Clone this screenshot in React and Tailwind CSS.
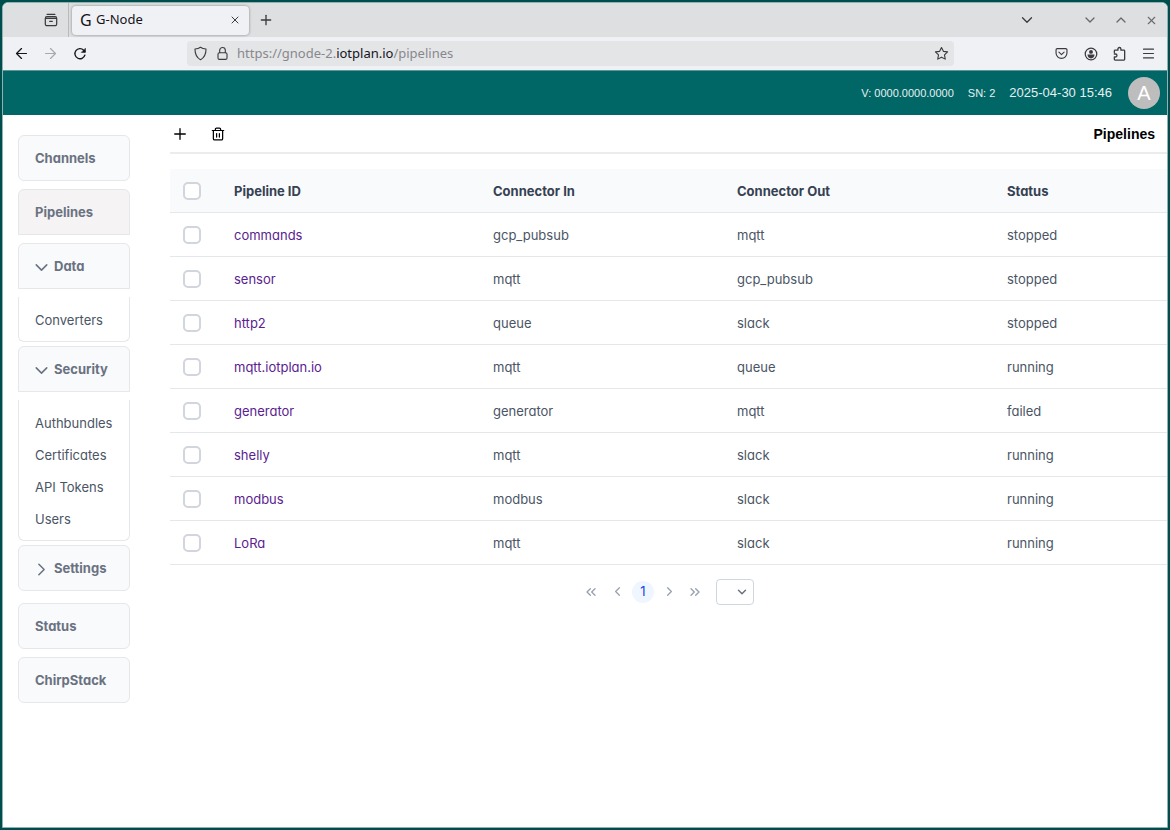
import React, { useState } from 'react';
import { ArrowLeft, ArrowRight, ChevronDown, ChevronRight, ChevronUp, ChevronLeft, ChevronsLeft, ChevronsRight, Menu, Plus, X } from 'lucide-react';

const PIPELINES = [
  { id: 'commands', input: 'gcp_pubsub', output: 'mqtt', status: 'stopped' },
  { id: 'sensor', input: 'mqtt', output: 'gcp_pubsub', status: 'stopped' },
  { id: 'http2', input: 'queue', output: 'slack', status: 'stopped' },
  { id: 'mqtt.iotplan.io', input: 'mqtt', output: 'queue', status: 'running' },
  { id: 'generator', input: 'generator', output: 'mqtt', status: 'failed' },
  { id: 'shelly', input: 'mqtt', output: 'slack', status: 'running' },
  { id: 'modbus', input: 'modbus', output: 'slack', status: 'running' },
  { id: 'LoRa', input: 'mqtt', output: 'slack', status: 'running' },
];

const CHECKBOX = 'block size-[18px] appearance-none rounded-[5px] border-2 border-gray-300 bg-white checked:bg-blue-500';

function Svg({ size = 16, children }) {
  return (
    <svg width={size} height={size} viewBox="0 0 16 16" fill="none" stroke="currentColor" strokeWidth="1.2" strokeLinecap="round" strokeLinejoin="round">
      {children}
    </svg>
  );
}

const I = {
  recent: () => <Svg size={14}><path strokeWidth="1.4" d="M3.500 1.500h9M1.500 6.200h13v6.500a1.800 1.800 0 0 1-1.800 1.800H3.300a1.800 1.800 0 0 1-1.800-1.800zM1.500 6.200c0-1.200.7-2 1.800-2h9.400c1.100 0 1.800.8 1.800 2M6.500 9.500h3"/></Svg>,
  reload: () => <Svg size={14}><path strokeWidth="1.5" d="M13.600 9.200a5.800 5.800 0 1 1-1.400-5.600l1.200 1.200"/><path d="M14.200 1.800v4.400H9.800z" fill="currentColor" strokeWidth="0.6"/></Svg>,
  shield: () => <Svg size={15}><path d="M8 1.300c1.700 1.300 3.600 1.800 5.900 1.900 0 5-1.300 9-5.900 11.500C3.400 12.200 2.100 8.200 2.100 3.200 4.400 3.100 6.300 2.600 8 1.300z"/></Svg>,
  lock: () => <Svg size={15}><rect x="3.200" y="7.200" width="9.600" height="7" rx="1.500"/><path d="M5 7V4.600a3 3 0 0 1 6 0V7"/></Svg>,
  star: () => <Svg size={15}><path d="M8 1.600l2 4.100 4.500.6-3.300 3.200.8 4.500L8 11.900l-4 2.100.8-4.500L1.500 6.300l4.500-.6z"/></Svg>,
  pocket: () => <Svg size={13}><path strokeWidth="1.400" d="M2.800 2h10.400a1.500 1.500 0 0 1 1.500 1.500v3.800a6.700 6.700 0 0 1-13.400 0V3.500A1.500 1.500 0 0 1 2.800 2zM4.800 6.300L8 9.300l3.200-3"/></Svg>,
  account: () => (
    <Svg size={14}>
      <circle cx="8" cy="8" r="6.600" strokeWidth="1.400"/>
      <circle cx="8" cy="5.600" r="2.200" fill="currentColor" stroke="none"/>
      <path d="M4 8.700h8c0 2.700-1.600 4.300-4 4.300s-4-1.600-4-4.300z" fill="currentColor" stroke="none"/>
    </Svg>
  ),
  puzzle: () => <Svg size={15}><path strokeWidth="1.400" d="M2.500 7V5.200c0-.5.300-.8.800-.8h3V3.200a1.600 1.600 0 0 1 3.200 0v1.200h3.200c.5 0 .8.300.8.800v9c0 .5-.3.800-.8.800H3.300a.8.800 0 0 1-.8-.8v-2.500h1.200a1.600 1.600 0 0 0 0-3.200H2.500"/></Svg>,
  trash: () => <Svg size={14}><path strokeWidth="1.400" d="M1.500 4h13M5 4V2.500c0-.8.500-1.300 1.300-1.300h3.400c.8 0 1.300.5 1.300 1.300V4M2.700 4v9.300c0 .9.600 1.500 1.500 1.500h7.600c.9 0 1.500-.6 1.500-1.500V4M6.400 7.500v4M9.600 7.500v4"/></Svg>,
};

function IconBtn({ label, className = '', children }) {
  return (
    <button type="button" aria-label={label} className={`flex h-6 w-[29px] items-center justify-center ${className}`}>
      {children}
    </button>
  );
}

function BrowserChrome() {
  return (
    <div className="font-['Noto_Sans',sans-serif] text-[13px] text-[#3b3b3f]">
      <div className="flex h-[34px] items-center rounded-t-md bg-[#dedfe1] pr-px">
        <div className="flex h-full w-[66px] shrink-0 items-center justify-end border-r border-[#b9babd] pr-[3px]">
          <IconBtn label="Recent browsing"><I.recent/></IconBtn>
        </div>
        <div className="ml-[3px] flex h-[29px] w-[177px] items-center rounded bg-[#f0f1f4] pl-2 shadow-[0_0_3px_rgba(0,0,0,0.4)]">
          <span className="w-4 text-base text-[#15141a]">G</span>
          <span className="flex-1 text-[#15141a]">G-Node</span>
          <IconBtn label="Close tab"><X size={12} strokeWidth={2}/></IconBtn>
        </div>
        <IconBtn label="New tab" className="ml-0.5"><Plus size={16} strokeWidth={2}/></IconBtn>
        <div className="flex-1"/>
        <IconBtn label="List all tabs" className="mr-[34px]"><ChevronDown size={18} strokeWidth={1.75}/></IconBtn>
        <div className="flex gap-0.5 text-[#6a6a6e]">
          <IconBtn label="Minimize"><ChevronDown size={16} strokeWidth={2}/></IconBtn>
          <IconBtn label="Maximize"><ChevronUp size={16} strokeWidth={2}/></IconBtn>
          <IconBtn label="Close window"><X size={13} strokeWidth={2}/></IconBtn>
        </div>
      </div>
      <div className="flex h-[34px] items-center border-b border-[#5d9696] bg-[#f0f1f4] pl-1">
        <IconBtn label="Back" className="text-[#15141a]"><ArrowLeft size={17} strokeWidth={1.75}/></IconBtn>
        <IconBtn label="Forward" className="text-[#a9a9ad]"><ArrowRight size={17} strokeWidth={1.75}/></IconBtn>
        <IconBtn label="Reload" className="text-[#15141a]"><I.reload/></IconBtn>
        <div className="mx-[93px] flex h-[25px] flex-1 items-center rounded bg-[#e4e5e7] pl-[5px]">
          <span className="flex w-4 justify-center"><I.shield/></span>
          <span className="ml-1.5 flex w-4 justify-center"><I.lock/></span>
          <div role="textbox" aria-label="Address" className="ml-[7px] flex-1 text-[#88888c]">
            https://gnode-2.<span className="text-[#15141a]">iotplan.io</span>/pipelines
          </div>
          <button type="button" aria-label="Bookmark this page" className="mr-[5px]"><I.star/></button>
        </div>
        <IconBtn label="Save to Pocket"><I.pocket/></IconBtn>
        <IconBtn label="Account"><I.account/></IconBtn>
        <IconBtn label="Extensions"><I.puzzle/></IconBtn>
        <IconBtn label="Application menu" className="mr-1"><Menu size={15} strokeWidth={1.75}/></IconBtn>
      </div>
    </div>
  );
}

function AppHeader() {
  return (
    <header className="flex h-11 items-center justify-end bg-[#006666] pr-[7px] font-['Liberation_Sans',Arial,sans-serif] text-[11px] text-[#e6f0f0]">
      <div className="mr-4 flex items-center gap-3.5">
        <span>V: 0000.0000.0000</span>
        <span>SN: 2</span>
        <span className="text-[13px]">2025-04-30 15:46</span>
      </div>
      <button type="button" aria-label="Account menu" className="size-8 rounded-full bg-[#bdbdbd] text-xl text-white">A</button>
    </header>
  );
}

const MENU_BTN = 'flex h-[46px] w-full items-center border border-gray-200 px-4 pt-0.5 text-left text-[13px] font-bold text-gray-500';

function MenuItem({ label, active }) {
  return (
    <a href="#" aria-current={active ? 'page' : undefined} className={`${MENU_BTN} ${active ? 'rounded-t-md bg-[#f6f3f4]' : 'rounded-md bg-gray-50'}`}>
      {label}
    </a>
  );
}

function MenuGroup({ label, items, defaultOpen = false }) {
  const [open, setOpen] = useState(defaultOpen);
  const Chevron = open ? ChevronDown : ChevronRight;
  return (
    <div>
      <button type="button" aria-expanded={open} onClick={() => setOpen(!open)}
        className={`${MENU_BTN} bg-gray-50 ${open ? 'rounded-t-md' : 'rounded-md'}`}>
        <Chevron size={21} strokeWidth={1.75} className="-ml-1 mr-0.5"/>
        {label}
      </button>
      {open && (
        <ul className="mt-2 rounded-b-md border border-t-0 border-gray-200 pt-[7px] pb-[5px]">
          {items.map(item => (
            <li key={item}>
              <a href="#" className="flex h-8 items-center px-4 pt-0.5 text-[13px] text-gray-600">{item}</a>
            </li>
          ))}
        </ul>
      )}
    </div>
  );
}

function Sidebar() {
  return (
    <nav className="ml-[15px] flex w-28 shrink-0 flex-col gap-2 pt-5">
      <MenuItem label="Channels"/>
      <MenuItem label="Pipelines" active/>
      <div className="mb-1 flex flex-col gap-1">
        <MenuGroup label="Data" items={['Converters']} defaultOpen/>
        <MenuGroup label="Security" items={['Authbundles', 'Certificates', 'API Tokens', 'Users']} defaultOpen/>
        <MenuGroup label="Settings" items={[]}/>
      </div>
      <MenuItem label="Status"/>
      <MenuItem label="ChirpStack"/>
    </nav>
  );
}

function Paginator() {
  const btn = 'flex size-[22px] items-center justify-center rounded-full text-gray-400';
  return (
    <div className="flex items-center justify-center gap-1 pt-3.5 pr-[3px]">
      <button type="button" aria-label="First page" className={btn}><ChevronsLeft size={16}/></button>
      <button type="button" aria-label="Previous page" className={btn}><ChevronLeft size={15}/></button>
      <button type="button" aria-current="page" className="size-[22px] rounded-full bg-blue-50 text-[13px] text-blue-700">1</button>
      <button type="button" aria-label="Next page" className={btn}><ChevronRight size={15}/></button>
      <button type="button" aria-label="Last page" className={btn}><ChevronsRight size={16}/></button>
      <div className="relative ml-1.5">
        <select aria-label="Rows per page" className="block h-[26px] w-[38px] appearance-none rounded border border-gray-300 bg-white"/>
        <ChevronDown size={14} strokeWidth={2.5} className="pointer-events-none absolute top-1.5 right-[5px] text-gray-500"/>
      </div>
    </div>
  );
}

function PipelineTable() {
  return (
    <table className="w-full table-fixed text-left text-[13px] text-gray-600">
      <colgroup>
        <col className="w-[48px]"/>
        <col className="w-[259px]"/>
        <col className="w-[244px]"/>
        <col className="w-[270px]"/>
        <col className="w-[176px]"/>
      </colgroup>
      <thead>
        <tr className="h-[43px] border-b border-gray-200 bg-gray-50 text-gray-700">
          <th className="pt-0.5 pl-[13px]"><input type="checkbox" aria-label="Select all" className={CHECKBOX}/></th>
          <th className="pt-0.5 pl-4">Pipeline ID</th>
          <th className="pt-0.5 pl-4">Connector In</th>
          <th className="pt-0.5 pl-4">Connector Out</th>
          <th className="pt-0.5 pl-4">Status</th>
        </tr>
      </thead>
      <tbody>
        {PIPELINES.map(p => (
          <tr key={p.id} className="h-11 border-b border-gray-200">
            <td className="pt-0.5 pl-[13px]"><input type="checkbox" aria-label={`Select ${p.id}`} className={CHECKBOX}/></td>
            <td className="pt-1 pl-4"><a href="#" className="text-[#5a2291]">{p.id}</a></td>
            <td className="pt-1 pl-4">{p.input}</td>
            <td className="pt-1 pl-4">{p.output}</td>
            <td className="pt-1 pl-4">{p.status}</td>
          </tr>
        ))}
      </tbody>
    </table>
  );
}

export default function App() {
  return (
    <div className="flex min-h-screen flex-col bg-[#004d4d] p-0.5">
      <div className="flex flex-1 flex-col rounded-t-md border border-[#8fb3b3] bg-white">
        <BrowserChrome/>
        <AppHeader/>
        <div className="flex flex-1 font-[Inter,sans-serif] [font-feature-settings:'cv02','cv03','cv04','cv11']">
          <Sidebar/>
          <main className="ml-10 min-w-0 flex-1">
            <div className="mb-[15px] flex h-[39px] items-center border-b-2 border-[#ececec] pr-3 text-black">
              <button type="button" aria-label="Add pipeline" className="ml-px"><Plus size={18} strokeWidth={1.75}/></button>
              <button type="button" aria-label="Delete pipelines" className="ml-[22px]"><I.trash/></button>
              <h1 className="ml-auto font-['Liberation_Sans',Arial,sans-serif] text-sm font-bold">Pipelines</h1>
            </div>
            <PipelineTable/>
            <Paginator/>
          </main>
        </div>
      </div>
    </div>
  );
}
